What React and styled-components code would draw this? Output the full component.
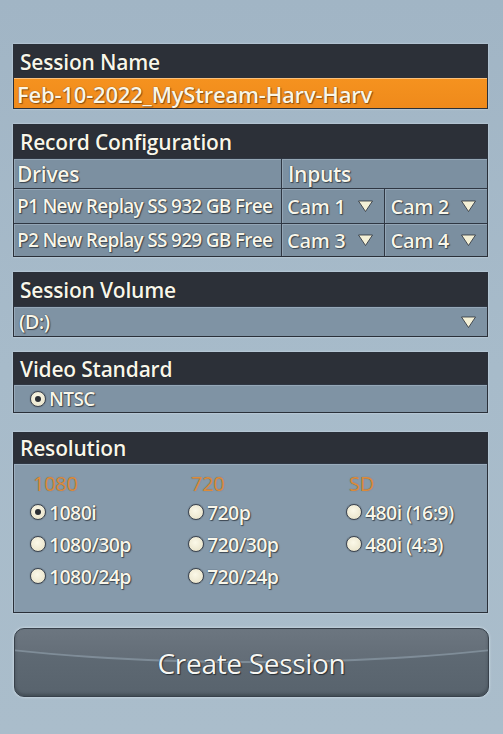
import React from "react";
import styled, { createGlobalStyle } from "styled-components";

const Global = createGlobalStyle`
  *, *::before, *::after { box-sizing: border-box; }
  html, body { margin: 0; padding: 0; }
  body {
    width: 503px;
    height: 734px;
    overflow: hidden;
    background: linear-gradient(180deg, #a1b5c5 0%, #a7bbca 50%, #aabdcb 100%);
    font-family: "Open Sans", "Noto Sans", sans-serif;
  }
`;

const Page = styled.div`
  display: flex;
  flex-direction: column;
  padding: 44px 15px 0 13px;
`;

const Panel = styled.section`
  border: 1px solid #2a3039;
  box-shadow: 0 0 2px rgba(230, 240, 248, 0.7);
  display: flex;
  flex-direction: column;
  margin-bottom: ${(p) => p.$mb ?? 15}px;
`;

const Header = styled.div`
  background: #2c3038;
  height: ${(p) => p.$h ?? 33}px;
  display: flex;
  align-items: center;
  padding-left: 6px;
  color: #f8f6ea;
  font-size: 21px;
  font-weight: 600;
  letter-spacing: -0.2px;
  text-shadow: 0 0 1px #000;
`;

const NameField = styled.div`
  background: linear-gradient(180deg, #f5921f 0%, #ef8a1b 100%);
  border-top: 1px solid #fbc07a;
  height: 30px;
  display: flex;
  align-items: center;
  padding-left: 3px;
  color: #fbf6e6;
  font-size: 22px;
  font-weight: 600;
  letter-spacing: -0.2px;
  text-shadow: 0 0 1px #6a3a08, 1px 1px 1px rgba(90, 45, 5, 0.6);
`;

const Grid = styled.div`
  display: grid;
  grid-template-columns: 268px 1fr 1fr;
  grid-template-rows: 30px 35px 33px;
`;

const Cell = styled.div`
  grid-column: ${(p) => p.$span || "auto"};
  background: ${(p) => (p.$sub ? "#7c90a1" : "#7b8fa0")};
  border-right: ${(p) => (p.$last ? "none" : "1px solid #2f3743")};
  border-top: 1px solid #2f3743;
  box-shadow: inset 1px 1px 0 rgba(220, 232, 242, 0.25);
  display: flex;
  align-items: center;
  justify-content: space-between;
  padding: 0 10px 0 ${(p) => p.$pl ?? 3}px;
  color: #f8f6ea;
  font-size: ${(p) => (p.$sub ? 21 : p.$tight ? 19 : 20)}px;
  font-weight: 600;
  letter-spacing: ${(p) => (p.$tight ? "-0.7px" : "-0.3px")};
  white-space: nowrap;
  overflow: hidden;
  text-shadow: 0 0 1px #1d232b, 1px 1px 1px rgba(20, 25, 32, 0.6);
`;

const Row = styled.div`
  background: #7f93a4;
  border-top: 1px solid #2f3743;
  box-shadow: inset 1px 1px 0 rgba(220, 232, 242, 0.25);
  height: ${(p) => p.$h ?? 30}px;
  display: flex;
  align-items: center;
  justify-content: space-between;
  padding: 0 10px 0 ${(p) => p.$pl ?? 5}px;
  color: #f8f6ea;
  font-size: ${(p) => p.$fs ?? 20}px;
  font-weight: 600;
  letter-spacing: -0.6px;
  text-shadow: 0 0 1px #1d232b, 1px 1px 1px rgba(20, 25, 32, 0.6);
`;

const RadioLine = styled.div`
  display: flex;
  align-items: center;
  gap: 3px;
  height: ${(p) => p.$h ?? 32}px;
`;

const RadioDot = styled.span`
  width: 16px;
  height: 16px;
  border-radius: 50%;
  background: radial-gradient(circle at 45% 40%, #fbf8e8 0%, #ece7cf 70%, #d8d2b8 100%);
  border: 1px solid #3c4450;
  box-shadow: 0 0 1px rgba(0, 0, 0, 0.6);
  display: flex;
  align-items: center;
  justify-content: center;
  flex: none;
  &::after {
    content: "";
    width: 6px;
    height: 6px;
    border-radius: 50%;
    background: ${(p) => (p.$on ? "#2a2e34" : "transparent")};
  }
`;

const ResBody = styled.div`
  background: #869aab;
  border-top: 1px solid #2f3743;
  box-shadow: inset 1px 1px 0 rgba(220, 232, 242, 0.25);
  height: 149px;
  display: grid;
  grid-template-columns: 158px 158px 1fr;
  padding: 8px 0 0 16px;
`;

const ResCol = styled.div`
  display: flex;
  flex-direction: column;
`;

const ResTitle = styled.div`
  height: 24px;
  line-height: 24px;
  padding-left: 3px;
  color: #dc8b3a;
  font-size: 20px;
  font-weight: 400;
  letter-spacing: -0.3px;
  text-shadow: 0 0 1px rgba(80, 50, 20, 0.5);
`;

const ResLabel = styled.span`
  color: #f8f6ea;
  font-size: 19.5px;
  font-weight: 600;
  letter-spacing: -0.6px;
  text-shadow: 0 0 1px #1d232b, 1px 1px 1px rgba(20, 25, 32, 0.6);
`;

const Button = styled.button`
  position: relative;
  overflow: hidden;
  height: 69px;
  margin: 0 -1px 0 1px;
  border-radius: 10px;
  border: 1px solid #38414b;
  background: linear-gradient(180deg, #66717b 0%, #5e6973 40%, #58636d 100%);
  box-shadow: 0 0 3px rgba(235, 242, 248, 0.8), inset 0 -2px 3px rgba(30, 36, 42, 0.35);
  color: #f6f6f2;
  font-family: "Open Sans", "Noto Sans", sans-serif;
  font-size: 28px;
  font-weight: 400;
  letter-spacing: -0.3px;
  text-shadow: 0 0 1px #1a1f25, 1px 1px 1px rgba(10, 14, 18, 0.6);
  padding: 0;
  &::before {
    content: "";
    position: absolute;
    left: -40%;
    width: 180%;
    top: -106px;
    height: 140px;
    border-radius: 50%;
    border-bottom: 2px solid rgba(150, 166, 178, 0.55);
    background: rgba(255, 255, 255, 0.04);
  }
  span { position: relative; }
`;

const Tri = () => (
  <svg width="17" height="14" viewBox="0 0 17 14" style={{ flex: "none" }}>
    <polygon
      points="1.5,2 15.5,2 8.5,12.5"
      fill="#f4f0d6"
      stroke="#2b3038"
      strokeWidth="0.8"
      strokeLinejoin="round"
    />
  </svg>
);

const resolution = [
  { title: "1080", items: [["1080i", true], ["1080/30p"], ["1080/24p"]] },
  { title: "720", items: [["720p"], ["720/30p"], ["720/24p"]] },
  { title: "SD", items: [["480i (16:9)"], ["480i (4:3)"]] },
];

export default function App() {
  return (
    <>
      <Global />
      <Page>
        <Panel>
          <Header $h={33}>Session Name</Header>
          <NameField>Feb-10-2022_MyStream-Harv-Harv</NameField>
        </Panel>

        <Panel>
          <Header $h={33}>Record Configuration</Header>
          <Grid>
            <Cell $sub>Drives</Cell>
            <Cell $sub $span="2 / 4" $last $pl={6}>Inputs</Cell>
            <Cell $tight>P1 New Replay SS 932 GB Free</Cell>
            <Cell $pl={5}>Cam 1 <Tri /></Cell>
            <Cell $pl={6} $last>Cam 2 <Tri /></Cell>
            <Cell $tight>P2 New Replay SS 929 GB Free</Cell>
            <Cell $pl={5}>Cam 3 <Tri /></Cell>
            <Cell $pl={6} $last>Cam 4 <Tri /></Cell>
          </Grid>
        </Panel>

        <Panel>
          <Header $h={33}>Session Volume</Header>
          <Row $h={30}>
            (D:) <Tri />
          </Row>
        </Panel>

        <Panel $mb={19}>
          <Header $h={31}>Video Standard</Header>
          <Row $h={28} $pl={16} $fs={19}>
            <RadioLine $h={28}>
              <RadioDot $on />
              NTSC
            </RadioLine>
          </Row>
        </Panel>

        <Panel>
          <Header $h={30}>Resolution</Header>
          <ResBody>
            {resolution.map((col) => (
              <ResCol key={col.title}>
                <ResTitle>{col.title}</ResTitle>
                {col.items.map(([label, on]) => (
                  <RadioLine key={label}>
                    <RadioDot $on={on} />
                    <ResLabel>{label}</ResLabel>
                  </RadioLine>
                ))}
              </ResCol>
            ))}
          </ResBody>
        </Panel>

        <Button>
          <span>Create Session</span>
        </Button>
      </Page>
    </>
  );
}
